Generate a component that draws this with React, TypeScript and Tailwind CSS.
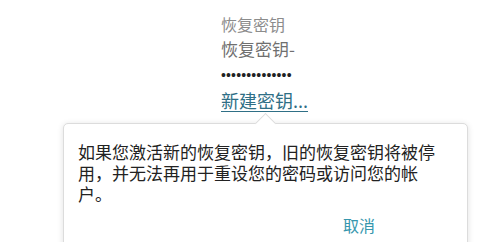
import React from "react";

const font = { fontFamily: '"Noto Sans CJK SC", "Liberation Sans", sans-serif' };

export default function App() {
    return (
        <div className="w-[500px] h-[242px] overflow-hidden bg-white" style={font}>
            {/* 恢复密钥字段 */}
            <div className="pl-[221px] pt-[13px] flex flex-col">
                <div className="text-[16px] leading-[22px] text-[#8c8c8c]">恢复密钥</div>
                <div className="text-[17px] leading-[24px] text-[#6f6f6f] mt-[2px]">恢复密钥-</div>
                <div
                    className="text-[14px] leading-[20px] text-[#222] tracking-[0.15px] mt-[4px]"
                    style={{ fontFamily: '"Liberation Sans", sans-serif' }}
                >
                    ••••••••••••••
                </div>
                <a className="text-[18px] leading-[24px] text-[#2f6f86] underline underline-offset-[3px] mt-[3px] w-fit">
                    新建密钥...
                </a>
            </div>

            {/* 提示弹层 */}
            <div className="relative ml-[63px] mt-[11px] w-[405px] h-[140px] bg-white border border-[#dcdcdc] rounded-[5px] shadow-[0_1px_6px_rgba(0,0,0,0.12)]">
                <div className="absolute -top-[8px] left-[194px] w-[15px] h-[15px] rotate-45 bg-white border-l border-t border-[#dcdcdc]" />
                <div className="pl-[14px] pr-[22px] pt-[17px]">
                    <p className="text-[17px] leading-[21px] text-[#222]">
                        如果您激活新的恢复密钥，旧的恢复密钥将被停用，并无法再用于重设您的密码或访问您的帐户。
                    </p>
                    <div className="flex justify-end pr-[70px] mt-[10px]">
                        <button className="text-[16px] leading-[22px] text-[#3596ad]">取消</button>
                    </div>
                </div>
            </div>
        </div>
    );
}
